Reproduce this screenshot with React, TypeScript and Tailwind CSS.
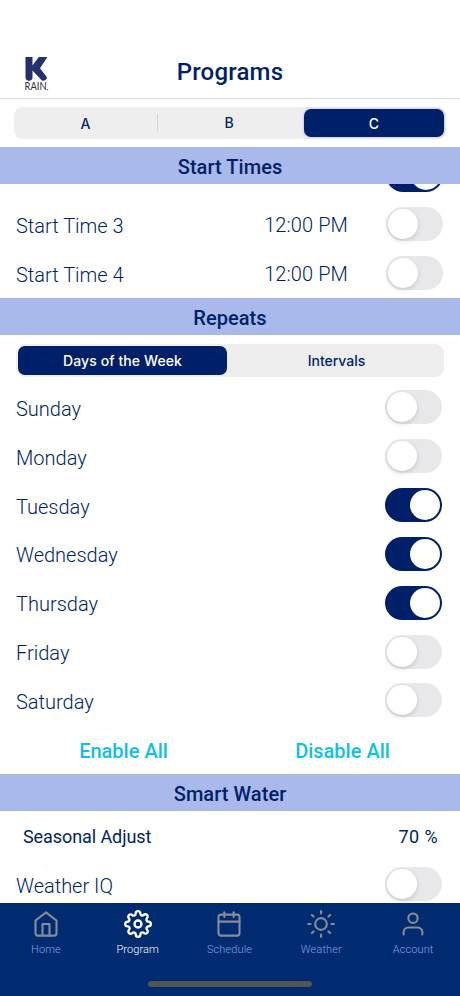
import { useState } from 'react';
import { FiCalendar, FiHome, FiSettings, FiSun, FiUser } from 'react-icons/fi';

const initialDays = [
    { name: 'Sunday', on: false },
    { name: 'Monday', on: false },
    { name: 'Tuesday', on: true },
    { name: 'Wednesday', on: true },
    { name: 'Thursday', on: true },
    { name: 'Friday', on: false },
    { name: 'Saturday', on: false },
];

const initialTimes = [
    { name: 'Start Time 3', time: '12:00 PM', on: false },
    { name: 'Start Time 4', time: '12:00 PM', on: false },
];

const navItems = [
    { label: 'Home', icon: FiHome },
    { label: 'Program', icon: FiSettings },
    { label: 'Schedule', icon: FiCalendar },
    { label: 'Weather', icon: FiSun },
    { label: 'Account', icon: FiUser },
];

function Toggle({ on, onClick }: { on: boolean; onClick?: () => void }) {
    return (
        <button
            role="switch"
            aria-checked={on}
            onClick={onClick}
            className={`flex h-[34px] w-[57px] shrink-0 items-center rounded-full px-0.5 ${on ? 'justify-end bg-[#001f69]' : 'justify-start bg-[#e8e8ea]'}`}
        >
            <span className={`size-[30px] rounded-full bg-white ${on ? '' : 'shadow-[0_2px_5px_rgba(0,0,0,0.14)]'}`} />
        </button>
    );
}

function SectionTitle({ children }: { children: string }) {
    return (
        <h2 className="flex h-[37px] shrink-0 items-center justify-center bg-[#a9b9ea] pt-[3px] text-[20px] font-medium tracking-[0.05px] text-[#001f69]">
            {children}
        </h2>
    );
}

function Logo() {
    return (
        <svg className="h-9 w-6" viewBox="0 0 24 36">
            <path
                d="M0.5 1H7.5V9.6L13.8 1H22.4L15 12.2L21.4 20.6C23 23 19.2 26.4 16.4 24L7.5 14.4V21.6C7.5 26 0.5 26 0.5 21.6Z"
                fill="#24306f"
            />
            <text x="-0.4" y="34" fontSize="10.5" fontFamily="Lato, sans-serif" textLength="22" lengthAdjust="spacingAndGlyphs" fill="#2d2d35">RAIN</text>
            <circle cx="22.6" cy="33.5" r="0.6" fill="#2d2d35" />
        </svg>
    );
}

export default function App() {
    const [program, setProgram] = useState('C');
    const [repeat, setRepeat] = useState('Days of the Week');
    const [times, setTimes] = useState(initialTimes);
    const [days, setDays] = useState(initialDays);
    const [weatherIq, setWeatherIq] = useState(false);

    const setAll = (on: boolean) => setDays(days.map(d => ({ ...d, on })));

    return (
        <div className="flex h-[996px] w-[460px] flex-col overflow-hidden bg-white font-[Roboto,sans-serif] text-[#001f69]">
            {/* Header */}
            <header className="grid h-[99px] shrink-0 grid-cols-[60px_1fr_60px] items-start border-b border-[#dcdce0] pt-14">
                <div className="pl-[25px]">
                    <Logo />
                </div>
                <h1 className="text-center text-[24px] leading-8 font-medium tracking-[0.2px]">Programs</h1>
            </header>

            {/* Program picker */}
            <div className="mx-[14px] mt-2 flex h-8 shrink-0 items-center rounded-[9px] bg-[#eeeeef] pr-0.5">
                {['A', 'B', 'C'].map((p, i) => (
                    <button
                        key={p}
                        onClick={() => setProgram(p)}
                        className={`font-[Inter,sans-serif] text-[14px] font-medium ${i === 0 ? 'w-[143px]' : ''} ${i === 1 ? 'h-[18px] w-[147px] border-l border-[#d4d4d8] pr-1 leading-4' : 'h-7'} ${i === 2 ? 'flex-1' : ''} ${program === p ? 'rounded-[7px] bg-[#001f69] text-white shadow-[0_0_2px_1px_rgba(169,185,234,0.5)]' : ''}`}
                    >
                        {p}
                    </button>
                ))}
            </div>

            <div className="mt-2 flex shrink-0 flex-col">
                <SectionTitle>Start Times</SectionTitle>
                {/* The list is scrolled to its end, the row above slides under the title */}
                <div className="flex h-[114px] flex-col justify-end overflow-hidden pb-px">
                    <div className="flex h-[49px] shrink-0 items-center justify-end pr-[17px]">
                        <Toggle on />
                    </div>
                    {times.map((t, i) => (
                        <div key={t.name} className="flex h-[49px] shrink-0 items-center pr-[17px] pl-4 text-[20px] font-light">
                            <span className="flex-1 pt-[5px]">{t.name}</span>
                            <span className="mr-[38px] pt-[3px] tracking-[0.1px]">{t.time}</span>
                            <Toggle on={t.on} onClick={() => setTimes(times.map((x, j) => (j === i ? { ...x, on: !x.on } : x)))} />
                        </div>
                    ))}
                </div>
            </div>

            <SectionTitle>Repeats</SectionTitle>
            <div className="mx-4 mt-[9px] flex h-[33px] shrink-0 items-center rounded-[9px] bg-[#eeeeef] px-0.5">
                {['Days of the Week', 'Intervals'].map(r => (
                    <button
                        key={r}
                        onClick={() => setRepeat(r)}
                        className={`h-[29px] rounded-[7px] font-[Inter,sans-serif] text-[14px] font-medium ${r === 'Intervals' ? 'flex-1 pl-1' : 'w-[209px] tracking-[0.1px]'} ${repeat === r ? 'bg-[#001f69] text-white' : ''}`}
                    >
                        {r}
                    </button>
                ))}
            </div>

            <div className="mt-[6px] flex shrink-0 flex-col">
                {days.map((d, i) => (
                    <div key={d.name} className="flex h-[48.85px] items-center justify-between pr-[18px] pl-4">
                        <span className="pt-[3px] text-[20px] font-light">{d.name}</span>
                        <Toggle on={d.on} onClick={() => setDays(days.map((x, j) => (j === i ? { ...x, on: !x.on } : x)))} />
                    </div>
                ))}
            </div>

            <div className="flex h-[49px] shrink-0 items-center pr-[8px] pl-[14px] pt-[3px] text-[20px] font-medium text-[#0fc0e4]">
                <button className="flex-1" onClick={() => setAll(true)}>Enable All</button>
                <button className="flex-1" onClick={() => setAll(false)}>Disable All</button>
            </div>

            <SectionTitle>Smart Water</SectionTitle>
            <div className="flex h-[49px] shrink-0 items-center justify-between pr-[22px] pl-[23px] pt-[2px] text-[18px]">
                <span className="tracking-[-0.08px]">Seasonal Adjust</span>
                <span className="tracking-[0.4px]">70 %</span>
            </div>
            <div className="flex min-h-0 flex-1 items-start justify-between overflow-hidden pr-[18px] pl-4 pt-[7px]">
                <span className="pt-[4px] text-[20px] leading-[30px] font-light">Weather IQ</span>
                <Toggle on={weatherIq} onClick={() => setWeatherIq(!weatherIq)} />
            </div>

            {/* Bottom navigation */}
            <nav className="flex h-[93px] shrink-0 flex-col items-center bg-[#002b70]">
                <div className="flex w-full pt-[7px] pr-px">
                    {navItems.map(({ label, icon: Icon }) => {
                        const active = label === 'Program';
                        return (
                            <button key={label} className={`flex flex-1 flex-col items-center text-[11px] leading-4 font-light tracking-[0.1px] ${active ? 'text-white' : 'text-[#7ea6e8]'}`}>
                                <Icon size={28} strokeWidth={active ? 2 : 1.8} className={active ? 'text-white' : 'text-[#868c98]'} />
                                <span className="mt-[4px]">{label}</span>
                            </button>
                        );
                    })}
                </div>
                <div className="mt-[23px] h-[6px] w-[164px] rounded-full bg-[#535552]" />
            </nav>
        </div>
    );
}
